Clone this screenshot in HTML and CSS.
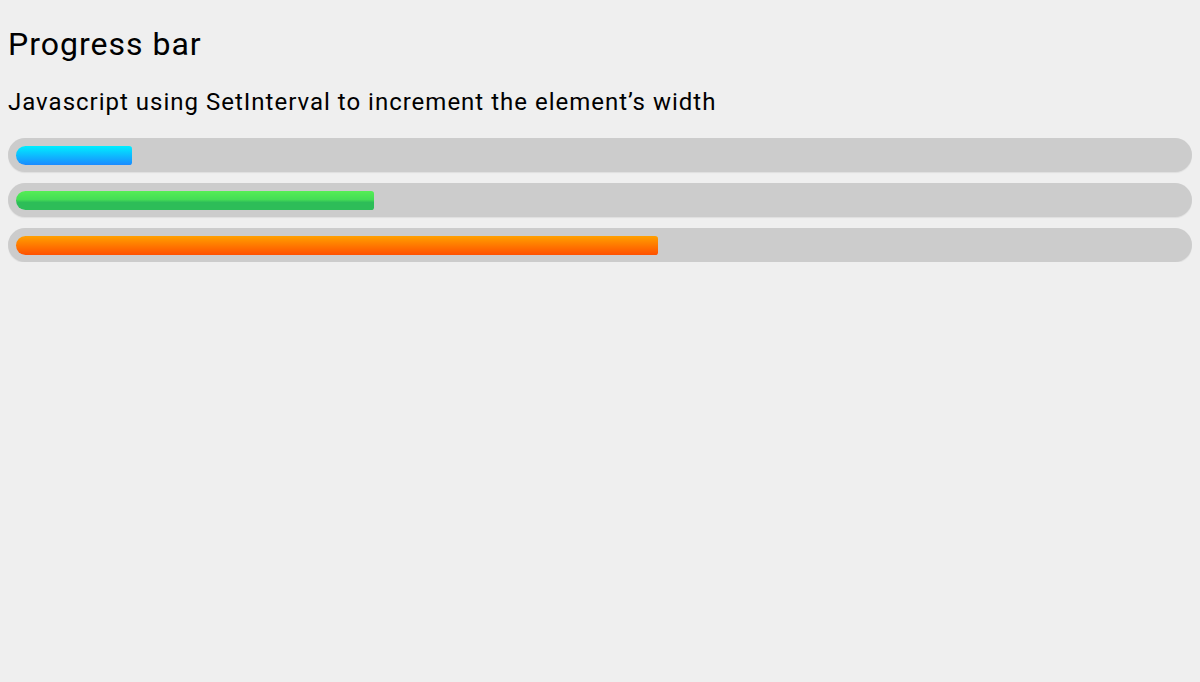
FILE: index.html
```html
<!DOCTYPE html>
<html lang="en">
<head>
<meta charset="utf-8">
<title>Progress bar</title>
<link rel="stylesheet" href="styles.css">
</head>
<body>
  <h1 class="title">Progress bar</h1>
  <h2 class="subtitle">Javascript using SetInterval to increment the element’s width</h2>
  <div class="bars">
    <div class="track"><div class="fill fill-blue" style="width: 116px"></div></div>
    <div class="track"><div class="fill fill-green" style="width: 358px"></div></div>
    <div class="track"><div class="fill fill-orange" style="width: 642px"></div></div>
  </div>
</body>
</html>
```
FILE: styles.css
```css
html, body {
  background: #efefef;
}
body {
  margin: 8px;
  font-family: Roboto, "Liberation Sans", sans-serif;
  color: #000;
  letter-spacing: 1px;
}
.title {
  font-size: 32px;
  font-weight: 400;
  margin: 17px 0 0;
  line-height: 1.2;
}
.subtitle {
  font-size: 24px;
  font-weight: 400;
  margin: 25px 0 0;
  line-height: 1.2;
}
.bars {
  margin-top: 21px;
  display: flex;
  flex-direction: column;
  gap: 11px;
}
.track {
  height: 34px;
  box-sizing: border-box;
  padding: 8px;
  background: #cccccc;
  border-radius: 17px;
  box-shadow: 0 1px 1px #dedede;
}
.fill {
  height: 19px;
  border-radius: 10px 3px 3px 10px;
}
.fill-blue {
  background: linear-gradient(to bottom, #00eeff, #1a8aff);
}
.fill-green {
  background: linear-gradient(to bottom, #55ee55 0%, #44dd55 45%, #2dbd58 60%, #2dbd58 100%);
}
.fill-orange {
  background: linear-gradient(to bottom, #ffa000, #ff5000);
}
```
